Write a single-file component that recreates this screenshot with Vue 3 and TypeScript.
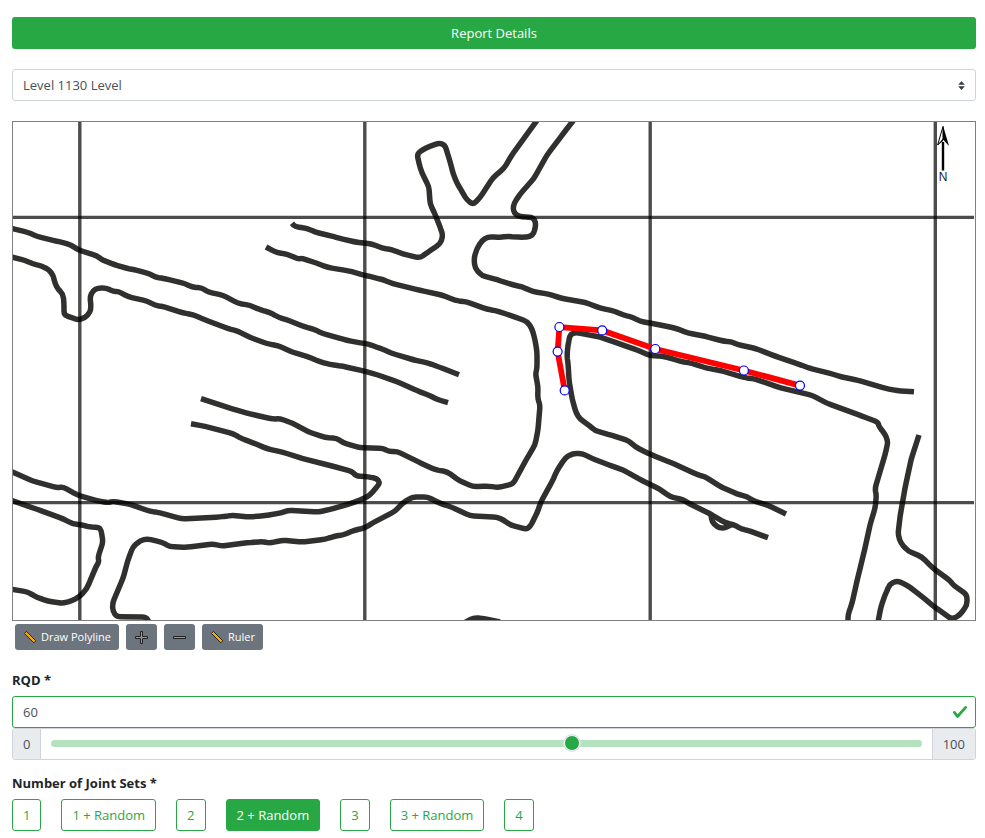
<script setup lang="ts">
import { ref } from 'vue'

interface Point {
  x: number
  y: number
}

const level = ref('1130')
const rqd = ref(60)
const jointSet = ref('2 + Random')
const jointSets: string[] = ['1', '1 + Random', '2', '2 + Random', '3', '3 + Random', '4']

const gridX: number[] = [79.8, 364.8, 650.2, 935.3]
const gridY: number[] = [217.4, 502.6]

const tunnels: string[] = [
  '10,228 27,232 37,236.3 53,240.3 63,242.5 71,245 78,249.7 97,256 103,260.3 115,264.7 125,268 137,270.3 150,274 155,277 165,278.7 185,283.7 192,287 202,288 208,292 223,295.3 238,303.3 250,305.3 261,310.3 269,312 278,317 290,321 303,326.3 313,329 323,333.5 343,339.3 355,342 368,344 382,349 392,353.3 413,359.7 428,363 440,367.3 459,374.7',
  '10,256.6 25,260.3 33,264 42,266 49,270 53,275 55,283.3 58,289.3 63,294 64,303.3 64,315 71,317.3 78,320 85,317.7 90,312.3 91,306.7 90,296.7 93,290.7 98,287.9 106,287.9 114,291.7 118,291.3 128,296.7 147,301 155,305.3 165,307 182,312.7 193,314.7 205,319.7 227,328.3 238,331.3 250,337.3 267,343.7 278,345.7 293,352.3 308,356.7 320,361.7 330,364.5 343,366.3 365,371.3 377,374.7 397,381.7 417,390.7 430,395.7 437,399.3 448,402.7',
  '292,223.3 295,226.7 307,228.3 315,232 330,235.7 340,238.3 355,242 372,244 382,248 392,249.7 403,254 420,258 430,250.7 440,244 443,236 440,226.7 436,216.7 430,203.3 429,186.7 422,173.3 419,163.3 417,153.7 426,147.7 439,143 445,145 451,165 453,173.3 457,183.3 467,200 473,204.5 480,197.7 493,177.7 504,168.3 513,153.3 538,119',
  '574.5,119 563,134 547,155 534,178.3 520,194.3 514,203.3 513,210 516,215 522,217 533,217.3 536,223.3 534,233.3 530,236.7 522,237.3 508,236.4 498,237.4 488,236.7 482,240.7 477,248.3 474,258.3 475,268.3 482,275.7 497,279.7 513,285 522,286.7 533,291.7 548,294 563,298.7 585,302.3 600,308 615,311.3 623,315 632,317 640,321.3 655,323.9 675,328 688,333 705,336.3 723,341 732,342 738,344.7 755,348.3 775,356 798,364 812,369 830,373.3 842,377 858,380.3 885,388.3 897,390.7 914,391.7',
  '266,247 277,252.7 287,254 298,259 302,258.3 317,263.3 328,267.5 348,270.7 365,275.3 383,279.7 393,283.7 420,290.3 442,295 455,300.3 467,302 487,309.3 495,310.3 510,315.3 527,321.3 532,328.7 535,340 537,351.7 537,368.3 535.5,374 538,386.7 537.7,398.3 540,405 538,430 535,445 527,458.3 513,484 498,487.5 488,486 473,486.7 460,481 447,471.7 435,469.7 418,461.7 397,451.3 389,451.5 383,448.3 360,447.7 343,442.7 337,438.3 325,437.5 308,431.7 293,423.3 280,418.7 273,419 250,414 233,409 201,398.7',
  '191,423.7 205,426.3 233,433.7 242,438.7 253,442.7 267,448.7 283,452.3 302,458.3 330,465.5 352,471.3 356,476 368,476.7 377,478.7 380,483.3 370,495 363,499 350,503.7 330,509.5 318,512 288,510.3 282,512.7 265,515.7 248,517 232,515.3 220,517 182,519 160,512.7 150,511.3 130,504.3 113,501.3 108,502.7 97,500.7 78,495.3 63,487 57,487.7 33,481 10,471',
  '10,499.8 37,509.3 63,518.7 73,524 82,524.7 88,526.7 99,527.7 101,530 103,541.7 98,557.3 99,561.7 96,566.7 87,588.3 80,596.3 72,600.7 63,603.3 48,601.3 37,597.3 27,591.7 10,589',
  '149,622 146,616.9 117,616.7 113,611.7 112.4,603.3 123,578.3 128,560 133,546.7 140,540.7 147,538.7 162,542.3 170,546.7 187,547.3 213,544 222,546 247,542.7 263,541.7 270,543 282,540.3 303,542 325,539.3 335,536 343,535 355,530 365,528 373,522.7 395,511.3 403,502.7 412,497.3 427,496.7 440,503.3 452,507.3 470,515.7 497,517.3 503,519.7 510,524.7 526,529.3 530,526.7 537,513.3 541,501.7 552,481.7 557,470.7 565,458 573,453.2 583,453.7 591,458 607,464.3 623,470 643,481 660,489.3 670,496.7 683,499.7 690,504 710,513.7 725,522.7 733,524.3 742,529.3 747,530 768,537.7',
  '711,514.5 712,521.7 717,526.7 723,528.6 732,524.5',
  '786,514 768,505.3 753,500.7 747,496.7 737,494 720,486.3 705,476.7 698,475 675,464.3 660,458.3 648,453.3 635,446.7 629,441 612,435.3 595,430.7 590,426 580,419 576,412.7 572,398.3 569,380 568.3,366.7 567,355 568,345 570,335 575,332.3 587,334.7 600,337 620,344 637,350 650,355.7 658,355.8 667,357 680,361.3 692,363.3 707,368.3 720,370.3 743,377.3 755,379 780,387.7 812,395.3 827,403.3 862,416 878,422.3 879,426.7 885,434 888,441.7 885,455 875,488.3 876.4,496 875,508.3 870,525 865,548.3 858,576.7 852,603.3 848,615 848,622',
  '919,435 911,460 905,488.3 900,516.7 898,535 901,543.3 908,551 922,557 932,567.3 950,580.7 953,584.7 967,595 967,605 960,615 952,619.3 935,607.3 922,596.7 907,585 897,580.7 890,584 885,595 881,606.7 878,622',
  '464,623 474,617.6 484,618.6 500,622',
]

// Cuts each corner with a short curve, so that surveyed points join softly.
function softPath(points: string): string {
  const pts: Point[] = points.split(' ').map((pair) => {
    const [x, y] = pair.split(',').map(Number)
    return { x, y }
  })
  const towards = (from: Point, to: Point): string => {
    const length = Math.hypot(to.x - from.x, to.y - from.y)
    const t = Math.min(0.45, 4 / length)
    return `${(from.x + (to.x - from.x) * t).toFixed(1)} ${(from.y + (to.y - from.y) * t).toFixed(1)}`
  }
  let d = `M${pts[0].x} ${pts[0].y}`
  for (let i = 1; i < pts.length - 1; i++) {
    d += ` L${towards(pts[i], pts[i - 1])} Q${pts[i].x} ${pts[i].y} ${towards(pts[i], pts[i + 1])}`
  }
  const last = pts[pts.length - 1]
  return `${d} L${last.x} ${last.y}`
}
const tunnelPaths = tunnels.map(softPath)

const route: Point[] = [
  { x: 564.7, y: 390.4 },
  { x: 557.6, y: 351.6 },
  { x: 559.4, y: 327 },
  { x: 602.2, y: 330.4 },
  { x: 655.3, y: 349 },
  { x: 743.9, y: 370.5 },
  { x: 800, y: 385.6 },
]
const routePoints = route.map((p) => `${p.x},${p.y}`).join(' ')
</script>

<template>
  <main class="page">
    <button type="button" class="report">Report Details</button>

    <div class="level">
      <select v-model="level" aria-label="Level">
        <option value="1130">Level 1130 Level</option>
      </select>
      <svg class="caret" viewBox="0 0 8 10" aria-hidden="true">
        <path d="M4 0 L7.8 4.2 H.2Z M4 10 L.2 5.8 H7.8Z" fill="#343a40" />
      </svg>
    </div>

    <svg class="map" viewBox="13 122 962 498" role="img" aria-label="Level plan">
      <g class="tunnels">
        <path v-for="(d, i) in tunnelPaths" :key="i" :d="d" />
      </g>
      <path d="M468 621 L474 617 L498 621Z" fill="#30302e" />
      <g class="grid">
        <line v-for="x in gridX" :key="'x' + x" :x1="x" :x2="x" y1="122" y2="620" />
        <line v-for="y in gridY" :key="'y' + y" :y1="y" :y2="y" x1="13" x2="974" />
      </g>
      <polyline class="route" :points="routePoints" />
      <circle v-for="(p, i) in route" :key="i" class="node" :cx="p.x" :cy="p.y" r="4.5" />
      <g class="north">
        <path d="M943 142 V170.5" stroke="#000" stroke-width="2.4" />
        <path d="M943 126.5 L937.6 145 L943 139.6Z" fill="#fff" stroke="#000" stroke-width="1" />
        <path d="M943 125.5 L949 146 L943 139.6Z" fill="#000" />
        <path d="M937.4 145.6 L943 138.4 L943 141Z" fill="#000" />
        <text x="943" y="181" text-anchor="middle">N</text>
      </g>
    </svg>

    <div class="tools">
      <button type="button">
        <svg class="ruler" viewBox="0 0 14 14" aria-hidden="true">
          <path d="M1.4 3.4 L3.4 1.4 L12.8 10.8 L10.8 12.8Z" fill="#f7a90c" stroke="#2a261c" />
        </svg>
        Draw Polyline
      </button>
      <button type="button" aria-label="Zoom in">
        <svg class="sign" viewBox="0 0 15 15" aria-hidden="true">
          <path d="M6.5 1.5 h2 v5 h5 v2 h-5 v5 h-2 v-5 h-5 v-2 h5Z" fill="#999" stroke="#222" />
        </svg>
      </button>
      <button type="button" aria-label="Zoom out">
        <svg class="sign" viewBox="0 0 15 15" aria-hidden="true">
          <path d="M1.5 6.5 h12 v2 h-12Z" fill="#999" stroke="#222" />
        </svg>
      </button>
      <button type="button">
        <svg class="ruler" viewBox="0 0 14 14" aria-hidden="true">
          <path d="M1.4 3.4 L3.4 1.4 L12.8 10.8 L10.8 12.8Z" fill="#f7a90c" stroke="#2a261c" />
        </svg>
        Ruler
      </button>
    </div>

    <label class="title" for="rqd">RQD *</label>
    <div class="rqd">
      <input id="rqd" v-model.number="rqd" type="text" inputmode="numeric" />
      <svg class="check" viewBox="0 0 8 8" aria-hidden="true">
        <path
          fill="#28a745"
          d="M2.3 6.73L.6 4.53c-.4-1.04.46-1.4 1.1-.8l1.1 1.4 3.4-3.8c.6-.63 1.6-.27 1.2.7l-4 4.6c-.43.5-.8.4-1.1.1z"
        />
      </svg>
    </div>
    <div class="slider">
      <span class="addon">0</span>
      <div class="range">
        <input v-model.number="rqd" type="range" min="0" max="100" aria-label="RQD value" />
      </div>
      <span class="addon">100</span>
    </div>

    <fieldset class="joints">
      <legend class="title">Number of Joint Sets *</legend>
      <div class="choices">
        <label v-for="name in jointSets" :key="name" :class="{ active: name === jointSet }">
          <input v-model="jointSet" type="radio" name="joint-sets" :value="name" />
          {{ name }}
        </label>
      </div>
    </fieldset>
  </main>
</template>

<style>
body {
  background: #fff;
}
</style>

<style scoped>
.page,
.page * {
  box-sizing: border-box;
}
.page {
  display: flex;
  flex-direction: column;
  padding: 17px 9px 7px 12px;
  color: #212529;
  font: 13px/20px 'Open Sans', sans-serif;
}
button,
input,
select {
  font: inherit;
}
.report {
  height: 32px;
  border: 0;
  border-radius: 3px;
  background: #28a745;
  color: #fff;
}
.level,
.rqd {
  position: relative;
}
.level {
  margin: 20px 0;
}
.level select,
.rqd input {
  display: block;
  width: 100%;
  height: 32px;
  padding: 0 10px;
  border: 1px solid #ced4da;
  border-radius: 3px;
  background: #fff;
  color: #495057;
  appearance: none;
}
.caret {
  position: absolute;
  top: 12px;
  right: 11px;
  width: 7px;
  height: 9px;
}
.map {
  display: block;
  width: 100%;
  border: 1px solid #808080;
}
.tunnels {
  fill: none;
  stroke: #30302e;
  stroke-width: 5.5;
  stroke-linejoin: round;
}
.grid {
  stroke: #000;
  stroke-opacity: 0.7;
  stroke-width: 3.4;
}
.route {
  fill: none;
  stroke: #f00;
  stroke-width: 5.8;
}
.node {
  fill: #fff;
  stroke: #00f;
  stroke-width: 1.2;
}
.north text {
  fill: #222;
  font: 12px 'Liberation Sans', sans-serif;
}
.tools {
  display: flex;
  gap: 7px;
  margin: 3px 3px 20px;
}
.tools button {
  display: flex;
  align-items: center;
  gap: 4px;
  height: 26px;
  padding: 0 8px;
  border: 0;
  border-radius: 3px;
  background: #6c757d;
  color: #fff;
  font-size: 11px;
}
.ruler {
  width: 14px;
  height: 14px;
}
.sign {
  width: 15px;
  height: 15px;
}
.title {
  padding: 0;
  font-weight: bold;
}
.rqd {
  margin-top: 6px;
}
.rqd input {
  border-color: #28a745;
}
.check {
  position: absolute;
  top: 8px;
  right: 8px;
  width: 16px;
  height: 16px;
}
.slider {
  display: flex;
  height: 32px;
  border: 1px solid #ced4da;
  border-radius: 3px;
  overflow: hidden;
}
.addon {
  padding: 5px 10px;
  background: #e9ecef;
  color: #495057;
}
.range {
  display: flex;
  flex: 1;
  align-items: center;
  padding: 0 10px 2px;
  border: solid #ced4da;
  border-width: 0 1px;
}
.range input {
  width: 100%;
  height: 16px;
  margin: 0;
  background: none;
  appearance: none;
}
.range input::-webkit-slider-runnable-track {
  height: 7px;
  border-radius: 4px;
  background: #b4e1be;
}
.range input::-webkit-slider-thumb {
  width: 16px;
  height: 16px;
  margin-top: -5px;
  border: 1px solid #f4f4fa;
  border-radius: 50%;
  background: #28a745;
  box-shadow: 0 0 0 1px #dee2e6;
  appearance: none;
}
.joints {
  min-width: 0;
  margin: 13px 0 0;
  padding: 0;
  border: 0;
}
.choices {
  display: flex;
  flex-wrap: wrap;
  gap: 20px;
  margin-top: 6px;
}
.choices label {
  position: relative;
  padding: 5px 10px;
  border: 1px solid #28a745;
  border-radius: 3px;
  color: #28a745;
}
.choices .active {
  background: #28a745;
  color: #fff;
}
.choices input {
  position: absolute;
  inset: 0;
  margin: 0;
  opacity: 0;
}
</style>
